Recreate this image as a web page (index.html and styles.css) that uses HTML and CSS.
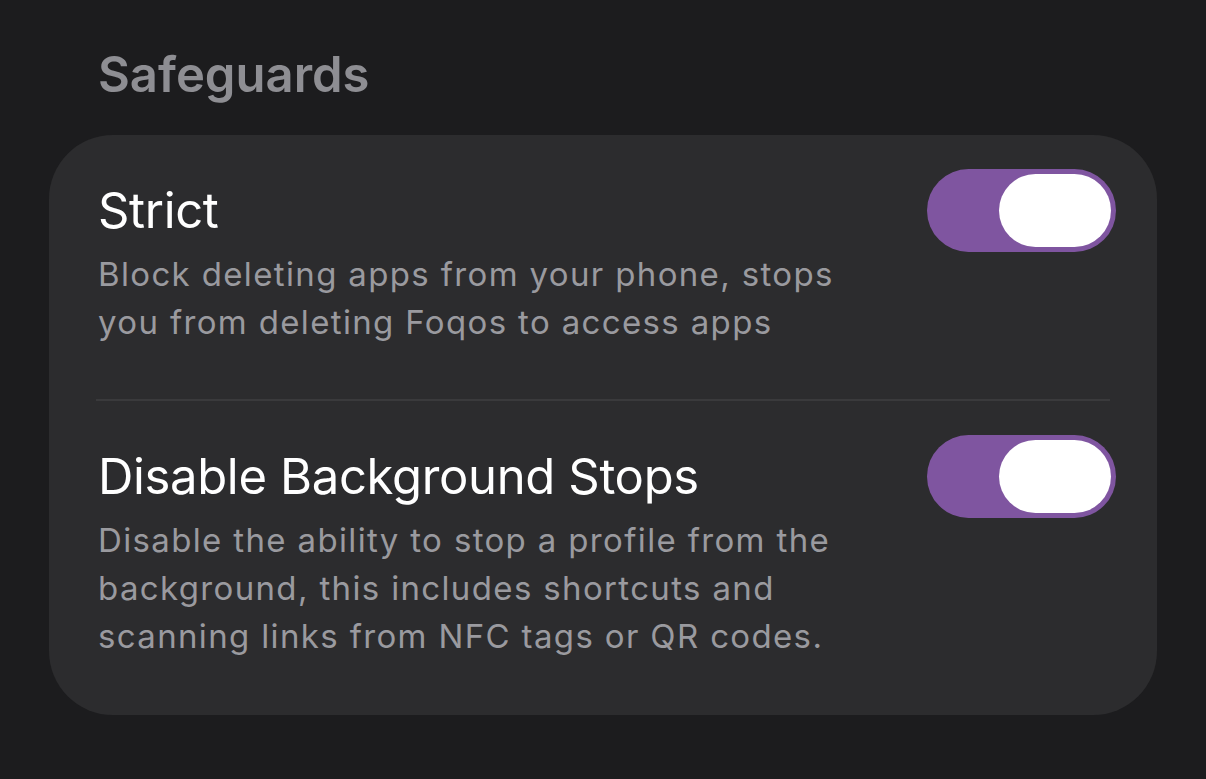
FILE: index.html
```html
<!DOCTYPE html>
<html>
<head>
<meta charset="utf-8">
<link rel="stylesheet" href="styles.css">
</head>
<body>
<main class="page">
  <h2 class="section-title">Safeguards</h2>
  <section class="card">
    <div class="row">
      <div class="text">
        <div class="title">Strict</div>
        <div class="desc">Block deleting apps from your phone, stops you from deleting Foqos to access apps</div>
      </div>
      <div class="toggle on"><span class="thumb"></span></div>
    </div>
    <div class="divider"></div>
    <div class="row last">
      <div class="text">
        <div class="title">Disable Background Stops</div>
        <div class="desc">Disable the ability to stop a profile from the background, this includes shortcuts and scanning links from NFC tags or QR codes.</div>
      </div>
      <div class="toggle on"><span class="thumb"></span></div>
    </div>
  </section>
</main>
</body>
</html>
```
FILE: styles.css
```css
html, body {
  margin: 0;
  padding: 0;
  background: #1c1c1e;
}
body {
  width: 1206px;
  height: 779px;
  overflow: hidden;
  font-family: Inter, "Noto Sans", "Liberation Sans", sans-serif;
}
.page {
  padding: 0 49px;
}
.section-title {
  margin: 0;
  padding: 46px 0 0 49px;
  height: 135px;
  box-sizing: border-box;
  font-size: 49px;
  line-height: 58px;
  font-weight: 600;
  color: #8e8e93;
  letter-spacing: 0;
}
.card {
  background: #2c2c2e;
  border-radius: 64px;
  width: 1108px;
  height: 580px;
  box-sizing: border-box;
}
.row {
  display: flex;
  justify-content: space-between;
  align-items: flex-start;
  padding: 34px 41px 53px 49px;
}
.row.last {
  padding-bottom: 0;
}
.text {
  padding-top: 13px;
  width: 780px;
}
.title {
  font-size: 49px;
  line-height: 58px;
  color: #ffffff;
  font-weight: 400;
  letter-spacing: -0.35px;
}
.desc {
  margin-top: 10px;
  font-size: 33px;
  line-height: 48px;
  color: #9a9a9f;
  letter-spacing: 1.35px;
}
.divider {
  height: 2px;
  background: #3a3a3c;
  margin: 0 47px;
}
.toggle {
  position: relative;
  width: 189px;
  height: 83px;
  border-radius: 42px;
  background: #7f55a0;
  flex: none;
}
.thumb {
  position: absolute;
  right: 5px;
  top: 5px;
  width: 112px;
  height: 73px;
  border-radius: 37px;
  background: #ffffff;
}
```
